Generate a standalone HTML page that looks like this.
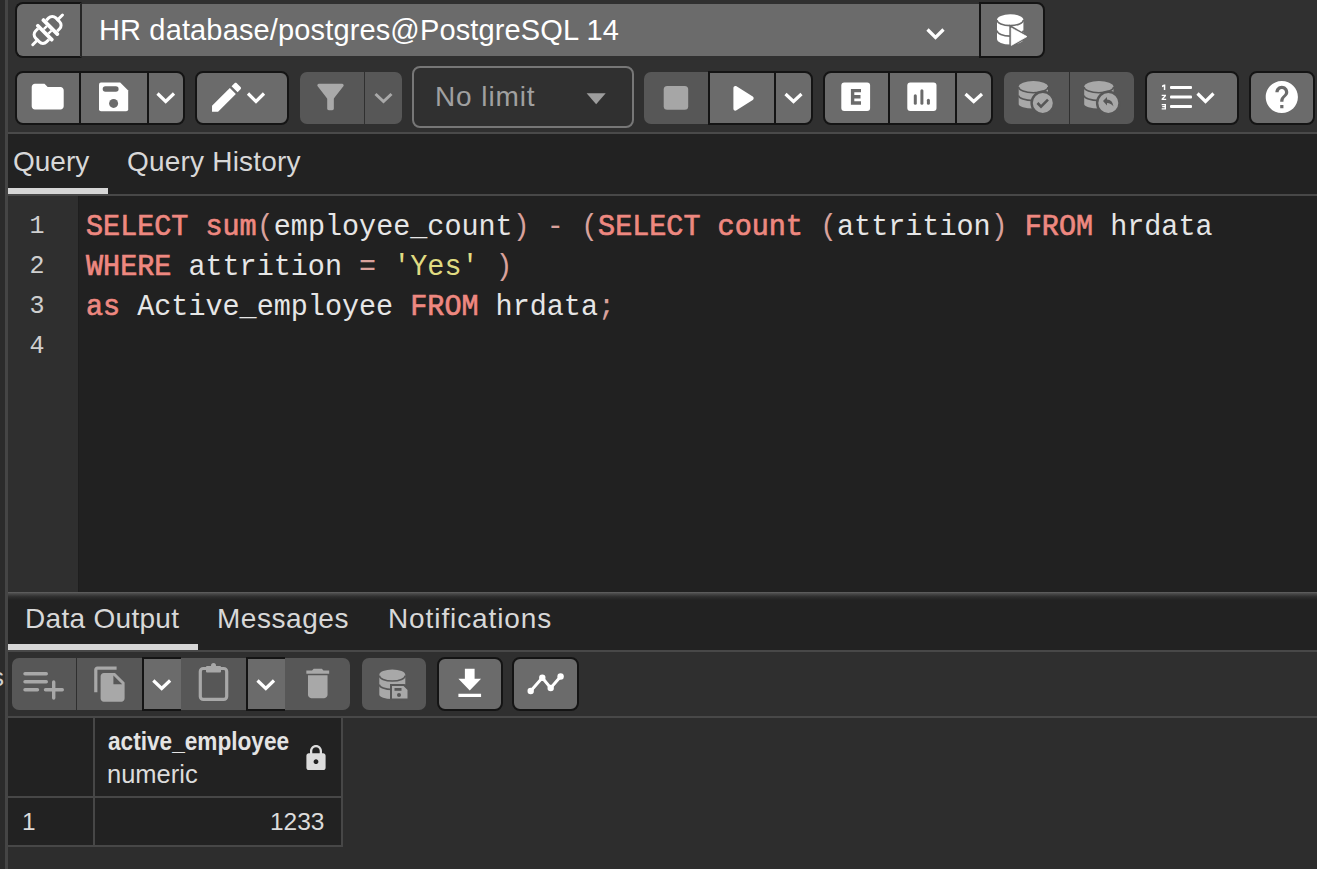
<!DOCTYPE html>
<html><head><meta charset="utf-8">
<style>
*{box-sizing:border-box;margin:0;padding:0}
html,body{width:1317px;height:869px;overflow:hidden;background:#2d2d2d;font-family:"Liberation Sans",sans-serif}
.a{position:absolute}
svg{position:absolute;overflow:visible}
#lstrip{left:0;top:0;width:5px;height:869px;background:#2b2b2b}
#lline{left:5px;top:0;width:3px;height:869px;background:#454545}
#toolbar{left:8px;top:0;width:1309px;height:132px;background:#303030}
#sep1{left:8px;top:132px;width:1309px;height:2px;background:#4a4a4a}
.b{position:absolute;background:#6b6b6b;border:2px solid #141414}
.d{position:absolute;background:#575757}
.tab{position:absolute;color:#d8d8d8;font-size:28px;white-space:nowrap;line-height:1}
#tabbar1{left:8px;top:134px;width:1309px;height:61px;background:#222}
#sepT1{left:8px;top:194px;width:1309px;height:2px;background:#484848}
#editor{left:8px;top:196px;width:1309px;height:396px;background:#212121}
#gutter{left:8px;top:196px;width:71px;height:396px;background:#2f2f2f;border-right:1px solid #1e1e1e}
.code{position:absolute;left:86px;font-family:"Liberation Mono",monospace;font-size:28.45px;white-space:pre;color:#e6e6e6;line-height:1;transform:scaleY(1.05);transform-origin:0 0}
.kw{color:#ee8880;-webkit-text-stroke:0.65px #ee8880}
.st{color:#e0dc82}
.pn{color:#d9a19c}
.ln{position:absolute;width:40px;left:4.5px;text-align:right;font-family:"Liberation Mono",monospace;font-size:25px;color:#cfcfcf;line-height:1}
#sep2{left:8px;top:592px;width:1309px;height:8px;background:linear-gradient(#646464,#4a4a4a 20%,#2e2e2e 60%,#222)}
#tabbar2{left:8px;top:600px;width:1309px;height:51px;background:#222}
#sep3{left:8px;top:650px;width:1309px;height:2px;background:#484848}
#tb2{left:8px;top:652px;width:1309px;height:64px;background:#2f2f2f}
#sep4{left:8px;top:716px;width:1309px;height:2px;background:#484848}
.ul{position:absolute;background:#d6d6d6;height:6px}
.cell{position:absolute;background:#222;border-right:2px solid #474747;border-bottom:2px solid #474747}
</style></head><body>
<div class="a" id="lstrip"></div>
<div class="a" id="lline"></div>
<div class="a" id="toolbar"></div>
<div class="a" id="sep1"></div>

<!-- Row 1 -->
<div class="b" style="left:15px;top:2px;width:67px;height:56px;border-radius:8px 0 0 8px;border-right:2px solid #262626"></div>
<div class="a" style="left:82px;top:3.5px;width:897px;height:52.5px;background:#6b6b6b"></div>
<div class="a" style="left:99px;top:16px;font-size:29px;color:#fff;white-space:nowrap;line-height:1;letter-spacing:0.14px">HR database/postgres@PostgreSQL 14</div>
<div class="b" style="left:979px;top:2px;width:66px;height:56px;border-radius:0 8px 8px 0"></div>

<!-- Row 2 -->
<div class="b" style="left:15px;top:71px;width:66px;height:54px;border-radius:8px 0 0 8px"></div>
<div class="b" style="left:79px;top:71px;width:70px;height:54px;border-radius:0"></div>
<div class="b" style="left:147px;top:71px;width:38px;height:54px;border-radius:0 8px 8px 0"></div>
<div class="b" style="left:195px;top:71px;width:94px;height:54px;border-radius:8px"></div>
<div class="d" style="left:300px;top:72px;width:64px;height:52px;border-radius:7px 0 0 7px"></div>
<div class="d" style="left:365px;top:72px;width:37px;height:52px;border-radius:0 7px 7px 0"></div>
<div class="a" style="left:412px;top:66px;width:222px;height:62px;border:2px solid #777;border-radius:8px"></div>
<div class="a" style="left:435px;top:83px;font-size:28px;color:#a0a0a0;white-space:nowrap;line-height:1;letter-spacing:0.9px">No limit</div>
<div class="d" style="left:644px;top:72px;width:66px;height:52px;border-radius:7px 0 0 7px"></div>
<div class="b" style="left:708px;top:71px;width:68px;height:54px;border-radius:0"></div>
<div class="b" style="left:774px;top:71px;width:39px;height:54px;border-radius:0 8px 8px 0"></div>
<div class="b" style="left:823px;top:71px;width:67px;height:54px;border-radius:8px 0 0 8px"></div>
<div class="b" style="left:888px;top:71px;width:69px;height:54px;border-radius:0"></div>
<div class="b" style="left:955px;top:71px;width:38px;height:54px;border-radius:0 8px 8px 0"></div>
<div class="d" style="left:1004px;top:72px;width:65px;height:52px;border-radius:7px 0 0 7px"></div>
<div class="d" style="left:1070px;top:72px;width:64px;height:52px;border-radius:0 7px 7px 0"></div>
<div class="b" style="left:1145px;top:71px;width:94px;height:54px;border-radius:8px"></div>
<div class="b" style="left:1249px;top:71px;width:66px;height:54px;border-radius:8px"></div>

<!-- Tabs 1 -->
<div class="a" id="tabbar1"></div>
<div class="a" id="sepT1"></div>
<div class="tab" style="left:13px;top:148px">Query</div>
<div class="tab" style="left:127px;top:148px;letter-spacing:0.2px">Query History</div>
<div class="ul" style="left:8px;top:188px;width:100px"></div>

<!-- Editor -->
<div class="a" id="editor"></div>
<div class="a" id="gutter"></div>
<div class="ln" style="top:214px">1</div>
<div class="ln" style="top:254px">2</div>
<div class="ln" style="top:294px">3</div>
<div class="ln" style="top:334px">4</div>
<div class="code" style="top:213px"><span class="kw">SELECT</span> <span class="kw">sum</span><span class="pn">(</span>employee_count<span class="pn">)</span> <span class="pn">-</span> <span class="pn">(</span><span class="kw">SELECT</span> <span class="kw">count</span> <span class="pn">(</span>attrition<span class="pn">)</span> <span class="kw">FROM</span> hrdata</div>
<div class="code" style="top:253px"><span class="kw">WHERE</span> attrition <span class="pn">=</span> <span class="st">'Yes'</span> <span class="pn">)</span></div>
<div class="code" style="top:293px"><span class="kw">as</span> Active_employee <span class="kw">FROM</span> hrdata<span class="pn">;</span></div>

<!-- Output panel -->
<div class="a" id="sep2"></div>
<div class="a" id="tabbar2"></div>
<div class="a" id="sep3"></div>
<div class="tab" style="left:25px;top:605px;letter-spacing:0.3px">Data Output</div>
<div class="tab" style="left:217px;top:605px;letter-spacing:0.55px">Messages</div>
<div class="tab" style="left:388px;top:605px;letter-spacing:0.9px">Notifications</div>
<div class="ul" style="left:8px;top:644px;width:190px"></div>
<div class="a" id="tb2"></div>
<div class="a" id="sep4"></div>

<div class="d" style="left:12px;top:658px;width:64px;height:52px;border-radius:7px 0 0 7px"></div>
<div class="d" style="left:77px;top:658px;width:65px;height:52px"></div>
<div class="b" style="left:142px;top:657px;width:39px;height:54px;border-radius:0;border-right:none"></div>
<div class="d" style="left:181px;top:658px;width:65px;height:52px"></div>
<div class="b" style="left:246px;top:657px;width:39px;height:54px;border-radius:0;border-right:none"></div>
<div class="d" style="left:285px;top:658px;width:65px;height:52px;border-radius:0 7px 7px 0"></div>
<div class="d" style="left:362px;top:658px;width:64px;height:52px;border-radius:7px"></div>
<div class="b" style="left:437px;top:657px;width:66px;height:54px;border-radius:8px"></div>
<div class="b" style="left:512px;top:657px;width:67px;height:54px;border-radius:8px"></div>

<!-- Grid -->
<div class="cell" style="left:8px;top:718px;width:87px;height:80px"></div>
<div class="cell" style="left:95px;top:718px;width:248px;height:80px"></div>
<div class="cell" style="left:8px;top:798px;width:87px;height:49px"></div>
<div class="cell" style="left:95px;top:798px;width:248px;height:49px"></div>
<div class="a" style="left:108px;top:729px;font-size:25px;font-weight:bold;color:#e4e4e4;white-space:nowrap;line-height:1;transform:scaleX(0.905);transform-origin:0 0">active_employee</div>
<div class="a" style="left:107px;top:762px;font-size:25.5px;color:#dcdcdc;white-space:nowrap;line-height:1">numeric</div>
<div class="a" style="left:22px;top:809.5px;font-size:24.5px;color:#dcdcdc;white-space:nowrap;line-height:1">1</div>
<div class="a" style="left:200px;width:124.5px;text-align:right;top:809.5px;font-size:24.5px;color:#dcdcdc;white-space:nowrap;line-height:1">1233</div>

<svg width="1317" height="869" style="left:0;top:0;z-index:5" viewBox="0 0 1317 869">
<!-- plug icon -->
<g transform="translate(47.6 29.9) rotate(-45)">
 <g id="plughalf" fill="none" stroke="#fff" stroke-width="3" stroke-linecap="round">
  <path d="M5.8 -7.7 H9.3 A5 5 0 0 1 14.3 -2.7 V2.7 A5 5 0 0 1 9.3 7.7 H5.8" stroke-linecap="butt"/>
  <line x1="14.3" y1="0" x2="21" y2="0"/>
  <rect x="2.1" y="-11.6" width="3.7" height="23.2" rx="1.4" fill="#fff" stroke="none"/>
 </g>
 <use href="#plughalf" transform="scale(-1 1)"/>
 <path d="M-2.2 -4.4 H2.2 V4.4 H-2.2 Z M-2.1 -2.1 V2.1 H2.1 V-2.1 Z" fill="#fff" fill-rule="evenodd"/>
</g>
<!-- chevron row1 -->
<polyline points="927.5,29.5 935.5,37.5 943.5,29.5" fill="none" stroke="#fff" stroke-width="3.2"/>
<!-- db run -->
<g>
  <path d="M997 20 V39 A13.2 5.6 0 0 0 1023.4 39 V20 Z" fill="#fff"/>
  <ellipse cx="1010.2" cy="19.9" rx="13.2" ry="5.6" fill="#fff"/>
  <path d="M997 20 A13.2 5.6 0 0 0 1023.4 20" fill="none" stroke="#6b6b6b" stroke-width="1.6"/>
  <path d="M997 30.5 A13.2 5.6 0 0 0 1023.4 30.5" fill="none" stroke="#6b6b6b" stroke-width="1.6"/>
  <path d="M1009.3 24.6 L1030.5 36.6 L1009.3 48.6 Z" fill="#6b6b6b"/><path d="M1011.3 28 L1026.9 36.6 L1011.3 45.4 Z" fill="#fff" stroke="#fff" stroke-width="0.8" stroke-linejoin="round"/>
</g>
<!-- folder -->
<path transform="translate(28.5 77.4) scale(1.6)" d="M10 4H4c-1.1 0-1.99.9-1.99 2L2 18c0 1.1.9 2 2 2h16c1.1 0 2-.9 2-2V8c0-1.1-.9-2-2-2h-8l-2-2z" fill="#fff"/>
<!-- save -->
<path d="M101 82.5 H120.2 L128.2 90.5 V109.3 A2 2 0 0 1 126.2 111.3 H101 A2 2 0 0 1 99 109.3 V84.5 A2 2 0 0 1 101 82.5 Z" fill="#fff"/>
<rect x="102.7" y="86.3" width="15.9" height="5.4" rx="2.7" fill="#6b6b6b"/>
<circle cx="113.6" cy="103.4" r="4.5" fill="#6b6b6b"/>
<!-- chevrons -->
<polyline points="157.5,93.5 165.7,101.5 174,93.5" fill="none" stroke="#fff" stroke-width="3.2"/>
<polyline points="248,93.5 256,101.5 264,93.5" fill="none" stroke="#fff" stroke-width="3.2"/>
<!-- pencil -->
<path transform="translate(207.2 78) scale(1.61)" d="M3 17.25V21h3.75L17.81 9.94l-3.75-3.75L3 17.25zM20.71 7.04c.39-.39.39-1.02 0-1.41l-2.34-2.34c-.39-.39-1.02-.39-1.41 0l-1.83 1.83 3.75 3.75 1.83-1.83z" fill="#fff"/>
<!-- filter -->
<path transform="translate(310.6 77.06) scale(1.66)" d="M4.25 5.61C6.27 8.2 10 13 10 13v6c0 .55.45 1 1 1h2c.55 0 1-.45 1-1v-6s3.72-4.8 5.74-7.39c.51-.66.04-1.61-.79-1.61H5.04c-.83 0-1.3.95-.79 1.61z" fill="#a9a9a9"/>
<polyline points="375.5,94 383.5,101.5 391.5,94" fill="none" stroke="#a9a9a9" stroke-width="3"/>
<!-- no limit triangle -->
<path d="M586.6 93.3 H605.7 L596.15 104.2 Z" fill="#9d9d9d"/>
<!-- stop -->
<rect x="663.7" y="86" width="24.5" height="23.8" rx="3.5" fill="#a6a6a6"/>
<!-- play -->
<path transform="translate(717.4 74.3) scale(2)" d="M8 6.82v10.36c0 .79.87 1.27 1.54.84l8.14-5.18c.62-.39.62-1.29 0-1.69L9.54 5.98C8.87 5.55 8 6.03 8 6.82z" fill="#fff"/>
<polyline points="785.5,94 793.5,101.5 801.5,94" fill="none" stroke="#fff" stroke-width="3.2"/>
<!-- E -->
<rect x="841.3" y="82.6" width="28.8" height="28.4" rx="3" fill="#fff"/>
<path d="M861 90.6 H852.6 V103 H861 M852.6 96.8 H860.5" fill="none" stroke="#6b6b6b" stroke-width="3.4"/>
<!-- analyze -->
<rect x="907.3" y="82.6" width="29.2" height="28.4" rx="3" fill="#fff"/>
<g stroke="#6b6b6b" stroke-width="3" stroke-linecap="round">
<line x1="915.3" y1="95.8" x2="915.3" y2="103.3"/>
<line x1="921.9" y1="90.8" x2="921.9" y2="103.3"/>
<line x1="928.4" y1="100.3" x2="928.4" y2="103.3"/>
</g>
<polyline points="965.5,94 973.7,101.5 982,94" fill="none" stroke="#fff" stroke-width="3.2"/>
<!-- commit -->
<g fill="#a8a8a8">
  <path d="M1018.7 87 V104 A14.65 4.5 0 0 0 1048 104 V87 Z"/>
  <ellipse cx="1033.35" cy="86.8" rx="14.65" ry="5.7"/>
  <path d="M1018.7 87 A14.65 5.7 0 0 0 1048 87" fill="none" stroke="#575757" stroke-width="1.6"/>
  <path d="M1018.7 95.5 A14.65 5 0 0 0 1048 95.5" fill="none" stroke="#575757" stroke-width="1.6"/>
  <circle cx="1042.8" cy="103" r="11.2" fill="#a8a8a8" stroke="#575757" stroke-width="2.4"/>
  <polyline points="1037.5,103 1041,106.6 1048,99.6" fill="none" stroke="#575757" stroke-width="2.6"/>
</g>
<!-- rollback -->
<g fill="#a8a8a8">
  <path d="M1084.2 87 V104 A14.65 4.5 0 0 0 1113.5 104 V87 Z"/>
  <ellipse cx="1098.85" cy="86.8" rx="14.65" ry="5.7"/>
  <path d="M1084.2 87 A14.65 5.7 0 0 0 1113.5 87" fill="none" stroke="#575757" stroke-width="1.6"/>
  <path d="M1084.2 95.5 A14.65 5 0 0 0 1113.5 95.5" fill="none" stroke="#575757" stroke-width="1.6"/>
  <circle cx="1108.3" cy="103" r="11.2" fill="#a8a8a8" stroke="#575757" stroke-width="2.4"/>
  <path d="M1103 101 L1107 97 V99.5 Q1112.5 99.5 1113.5 106.5 Q1111 103 1107 103 V105.5 Z" fill="#575757"/>
</g>
<!-- macro -->
<g fill="#fff">
  <rect x="1170" y="86" width="22" height="3" rx="1"/>
  <rect x="1170" y="95.5" width="22" height="3" rx="1"/>
  <rect x="1170" y="105" width="22" height="3" rx="1"/>
  <path d="M1162 85.5 L1164 84.5 H1165.3 V90 H1163.8 V86.5 L1162 87.2 Z"/>
  <path d="M1161.7 94.8 H1166 V96 L1163.5 98.7 H1166.2 V99.9 H1161.6 V98.8 L1164.2 96 H1161.7 Z"/>
  <path d="M1161.7 104 H1166 V109.4 H1161.7 V108.2 H1164.6 V107.2 H1162.2 V106.1 H1164.6 V105.2 H1161.7 Z"/>
</g>
<polyline points="1197.5,93.5 1205.5,101.5 1213.5,93.5" fill="none" stroke="#fff" stroke-width="3.2"/>
<!-- help -->
<path transform="translate(1262.5 77.7) scale(1.61)" d="M12 2C6.48 2 2 6.48 2 12s4.48 10 10 10 10-4.48 10-10S17.52 2 12 2zm1 17h-2v-2h2v2zm2.07-7.75l-.9.92C13.45 12.9 13 13.5 13 15h-2v-.5c0-1.1.45-2.1 1.17-2.83l1.24-1.26c.37-.36.59-.86.59-1.41 0-1.1-.9-2-2-2s-2 .9-2 2H8c0-2.21 1.79-4 4-4s4 1.79 4 4c0 .88-.36 1.68-.93 2.25z" fill="#fff"/>

<!-- output toolbar -->
<g stroke="#a8a8a8" stroke-width="3.4" stroke-linecap="round" fill="none">
  <line x1="25" y1="673.7" x2="46.3" y2="673.7"/>
  <line x1="25" y1="681.8" x2="46.3" y2="681.8"/>
  <line x1="25" y1="689.8" x2="37.5" y2="689.8"/>
  <line x1="45.5" y1="689.8" x2="62.3" y2="689.8"/>
  <line x1="53.7" y1="682" x2="53.7" y2="698"/>
</g>
<!-- copy -->
<path transform="translate(91 665) scale(1.6)" d="M16 1H4c-1.1 0-2 .9-2 2v14h2V3h12V1zm-1 4l6 6v10c0 1.1-.9 2-2 2H7.99C6.89 23 6 22.1 6 21l.01-14c0-1.1.89-2 1.99-2h7zm-1 7h5.5L14 6.5V12z" fill="#a8a8a8"/>
<polyline points="153.3,680.5 161.7,688.5 170.1,680.5" fill="none" stroke="#fff" stroke-width="3.2"/>
<!-- paste -->
<rect x="200.3" y="668.5" width="26.4" height="30.9" rx="3" fill="none" stroke="#a8a8a8" stroke-width="3.2"/>
<rect x="206" y="666" width="15" height="6.5" rx="1" fill="#a8a8a8"/>
<circle cx="213.5" cy="665.5" r="2.5" fill="#a8a8a8"/>
<polyline points="257.5,680.5 265.8,688.5 274,680.5" fill="none" stroke="#fff" stroke-width="3.2"/>
<!-- trash -->
<path transform="translate(298.2 663.9) scale(1.63)" d="M6 19c0 1.1.9 2 2 2h8c1.1 0 2-.9 2-2V7H6v12zM19 4h-3.5l-1-1h-5l-1 1H5v2h14V4z" fill="#a8a8a8"/>
<!-- db save -->
<g fill="#a8a8a8">
  <path d="M379.3 675 V694.5 A13 4.5 0 0 0 405.3 694.5 V675 Z"/>
  <ellipse cx="392.3" cy="675" rx="13" ry="5.5"/>
  <path d="M379.3 675.5 A13 5.5 0 0 0 405.3 675.5" fill="none" stroke="#575757" stroke-width="1.6"/>
  <path d="M379.3 684.5 A13 5 0 0 0 405.3 684.5" fill="none" stroke="#575757" stroke-width="1.6"/>
  <path d="M391 685 H404 L408.5 689.5 V699.5 H391 Z" fill="#a8a8a8" stroke="#575757" stroke-width="2"/>
  <rect x="394.5" y="688" width="7" height="2.8" fill="#575757"/>
  <circle cx="399" cy="695" r="2" fill="#575757"/>
</g>
<!-- download -->
<path transform="translate(450.3 663.8) scale(1.62 1.665)" d="M19 9h-4V3H9v6H5l7 7 7-7zM5 18v2h14v-2H5z" fill="#fff"/>
<!-- graph -->
<polyline points="530.7,691 542.3,677.8 550.7,688 560.6,676.5" fill="none" stroke="#fff" stroke-width="3"/>
<g fill="#fff"><circle cx="530.7" cy="691" r="3.2"/><circle cx="542.3" cy="677.8" r="3.2"/><circle cx="550.7" cy="688" r="3.2"/><circle cx="560.6" cy="676.5" r="3.2"/></g>
<!-- lock -->
<path transform="translate(301.6 743.7) scale(1.2)" d="M18 8h-1V6c0-2.76-2.24-5-5-5S7 3.24 7 6v2H6c-1.1 0-2 .9-2 2v10c0 1.1.9 2 2 2h12c1.1 0 2-.9 2-2V10c0-1.1-.9-2-2-2zm-6 9c-1.1 0-2-.9-2-2s.9-2 2-2 2 .9 2 2-.9 2-2 2zm3.1-9H8.9V6c0-1.710 1.39-3.1 3.1-3.1 1.71 0 3.1 1.39 3.1 3.1v2z" fill="#dcdcdc"/>
</svg>
<div class="a" style="left:-9px;top:664px;font-size:26px;color:#cfcfcf;line-height:1">s</div>
</body></html>
